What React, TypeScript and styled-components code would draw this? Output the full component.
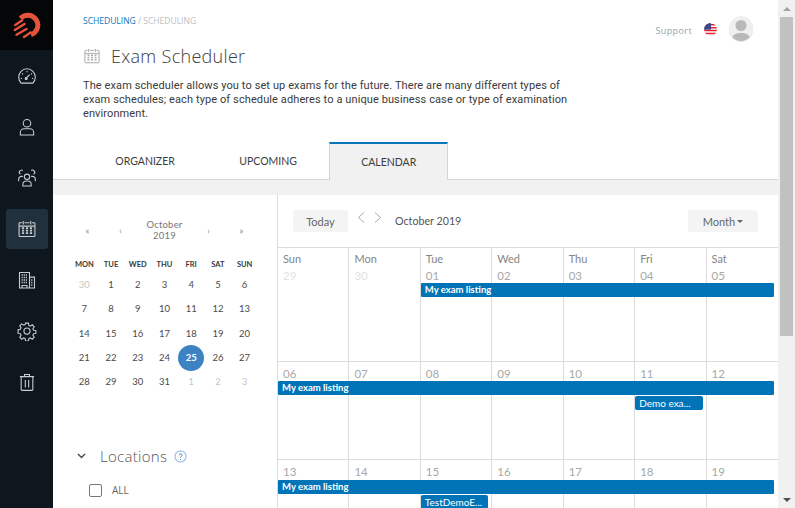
import React from "react";
import styled, { createGlobalStyle } from "styled-components";

const GlobalStyle = createGlobalStyle`
  html, body {
    margin: 0;
    padding: 0;
    height: 100%;
    overflow: hidden;
    background: #fff;
  }
  * {
    box-sizing: border-box;
  }
`;

const Page = styled.div`
  display: flex;
  width: 795px;
  height: 508px;
  overflow: hidden;
  font-family: "Lato", "Liberation Sans", sans-serif;
`;

/* sidebar */
const Sidebar = styled.nav`
  flex: 0 0 53px;
  background: #0f171e;
  display: flex;
  flex-direction: column;
  align-items: center;
`;

const LogoBox = styled.div`
  width: 100%;
  height: 50px;
  background: #040608;
  display: flex;
  align-items: center;
  justify-content: center;
`;

const NavList = styled.div`
  width: 100%;
  display: flex;
  flex-direction: column;
  align-items: center;
  padding-top: 6px;
`;

const NavItem = styled.div<{ $active?: boolean }>`
  width: 42px;
  height: 40px;
  margin-bottom: 11px;
  border-radius: 3px;
  background: ${({ $active }) => ($active ? "#20303c" : "transparent")};
  color: #c9cdd0;
  display: flex;
  align-items: center;
  justify-content: center;
`;

/* main column */
const Main = styled.main`
  flex: 1;
  min-width: 0;
  display: flex;
  flex-direction: column;
  overflow: hidden;
`;

const Header = styled.header`
  height: 142px;
  padding: 15px 25px 0 30px;
  display: flex;
  justify-content: space-between;
  align-items: flex-start;
`;

const HeaderText = styled.div`
  width: 490px;
`;

const Breadcrumb = styled.div`
  font-family: "Open Sans", sans-serif;
  font-size: 8.5px;
  line-height: 12px;
  color: #c0c0c0;
  text-transform: uppercase;

  span {
    color: #0b79b8;
  }
`;

const TitleRow = styled.div`
  display: flex;
  align-items: center;
  gap: 10px;
  margin-top: 16px;
  color: #a9a9a9;
`;

const Title = styled.h1`
  margin: 0;
  font-family: "Open Sans", sans-serif;
  font-weight: 300;
  font-size: 18px;
  line-height: 26px;
  color: #3c3c3c;
  letter-spacing: 0.3px;
`;

const Intro = styled.p`
  margin: 10px 0 0;
  font-family: "Roboto", sans-serif;
  font-size: 11px;
  line-height: 14px;
  color: #3a3a3a;
  letter-spacing: 0.1px;
`;

const UserTools = styled.div`
  display: flex;
  align-items: center;
  margin-top: 1px;
`;

const SupportLink = styled.span`
  font-family: "Open Sans", sans-serif;
  font-size: 9px;
  color: #99a1ab;
  letter-spacing: 0.4px;
  margin: 4px 12px 0 0;
`;

const FlagIcon = styled.svg`
  margin-top: 2px;
`;

const Avatar = styled.div`
  width: 24px;
  height: 25px;
  margin-left: 12px;
  border-radius: 50%;
  background: #eeeff1;
  overflow: hidden;
  box-shadow: 0 1px 0 #e2e2e2;
`;

const TabBar = styled.div`
  height: 38px;
  padding-left: 30px;
  display: flex;
  border-bottom: 1px solid #d5d5d5;
`;

const Tab = styled.div<{ $active?: boolean }>`
  padding: 1px 32.25px 0;
  height: ${({ $active }) => ($active ? "38px" : "37px")};
  display: flex;
  align-items: center;
  justify-content: center;
  font-size: 10.5px;
  color: #3d3d3d;
  ${({ $active }) =>
    $active
      ? `
    background: #f1f1f1;
    border-top: 2px solid #0676b9;
    border-left: 1px solid #d5d5d5;
    border-right: 1px solid #d5d5d5;
    padding: 0 31px;
  `
      : ""}
`;

const Band = styled.div`
  height: 15px;
  background: #f1f1f1;
  flex: none;
`;

const Content = styled.div`
  flex: 1;
  min-height: 0;
  display: flex;
`;

/* left panel */
const LeftPanel = styled.aside`
  flex: 0 0 225px;
  border-right: 1px solid #dcdcdc;
  padding: 23px 0 0 18px;
`;

const MiniNav = styled.div`
  width: 187px;
  height: 24px;
  display: grid;
  grid-template-columns: 33px 33px 55px 33px 33px;
  align-items: center;
  justify-items: center;
  margin-bottom: 14px;
`;

const MiniArrow = styled.span`
  font-size: 9px;
  color: #8a8a8a;
`;

const MiniMonth = styled.div`
  font-size: 9.5px;
  line-height: 11px;
  letter-spacing: 0.2px;
  text-align: center;
  color: #7d7474;
`;

const MiniGrid = styled.div`
  width: 187px;
  display: grid;
  grid-template-columns: repeat(7, 1fr);
  grid-template-rows: 17px repeat(5, 24.3px);
  align-items: center;
  justify-items: center;
`;

const WeekDay = styled.div`
  font-size: 7.5px;
  font-weight: 700;
  color: #3a3a3a;
`;

const MiniDay = styled.div<{ $muted?: boolean; $selected?: boolean }>`
  width: 26px;
  height: 26px;
  line-height: 26px;
  text-align: center;
  font-size: 9.5px;
  border-radius: 50%;
  color: ${({ $muted, $selected }) =>
    $selected ? "#fff" : $muted ? "#c6c6c6" : "#4a4a4a"};
  background: ${({ $selected }) => ($selected ? "#3d83c4" : "transparent")};
  font-weight: ${({ $selected }) => ($selected ? 700 : 400)};
`;

const FilterHead = styled.div`
  display: flex;
  align-items: center;
  margin: 53px 0 0 6px;
  color: #4a4a4a;
`;

const FilterTitle = styled.div`
  font-family: "Open Sans", sans-serif;
  font-weight: 300;
  font-size: 15px;
  line-height: 18px;
  color: #555;
  letter-spacing: 0.3px;
  margin: 0 7px 0 14px;
`;

const CheckRow = styled.label`
  display: flex;
  align-items: center;
  gap: 10px;
  margin: 19px 0 0 18px;
  font-family: "Open Sans", sans-serif;
  font-size: 10px;
  line-height: 13px;
  color: #666;
`;

const CheckBox = styled.span`
  width: 13px;
  height: 13px;
  border: 1px solid #777;
  border-radius: 2px;
`;

/* calendar */
const CalendarPanel = styled.section`
  flex: 1;
  min-width: 0;
  display: flex;
  flex-direction: column;
  overflow: hidden;
`;

const Toolbar = styled.div`
  height: 52px;
  flex: none;
  padding: 15px 20px 0 15px;
  display: flex;
  align-items: flex-start;
`;

const ToolButton = styled.div<{ $width: number }>`
  width: ${({ $width }) => $width}px;
  height: 22px;
  background: #f4f4f4;
  border-radius: 3px;
  font-size: 11px;
  color: #666;
  display: flex;
  align-items: center;
  justify-content: center;
  gap: 2px;
`;

const PagerIcons = styled.div`
  display: flex;
  gap: 5px;
  margin-left: 7px;
  color: #aaa;
`;

const MonthLabel = styled.div`
  font-size: 10.7px;
  color: #555;
  line-height: 22px;
  margin-left: 11px;
  flex: 1;
`;

const Caret = styled.span`
  width: 0;
  height: 0;
  border-left: 3px solid transparent;
  border-right: 3px solid transparent;
  border-top: 3px solid #666;
`;

const Week = styled.div<{ $height: number; $head: number }>`
  height: ${({ $height }) => $height}px;
  flex: none;
  display: grid;
  grid-template-columns: repeat(7, 1fr);
  grid-template-rows: ${({ $head }) => $head}px 14px 1px 14px 1fr;
  border-top: 1px solid #dcdcdc;
`;

const DayCell = styled.div<{ $col: number }>`
  grid-column: ${({ $col }) => $col};
  grid-row: 1 / -1;
  border-right: 1px solid #dcdcdc;
  padding: 3px 0 0 5px;
  font-size: 11px;
  line-height: 17px;
  min-width: 0;

  &:nth-child(7) {
    border-right: none;
  }
`;

const DayName = styled.div`
  color: #858585;
  margin-top: -1px;
`;

const DayNumber = styled.div<{ $muted?: boolean }>`
  color: ${({ $muted }) => ($muted ? "#e2e2e2" : "#a8a8a8")};
  font-size: 11.5px;
`;

const EventBar = styled.div<{ $start: number; $span: number; $row: number; $short?: boolean }>`
  grid-column: ${({ $start, $span }) => `${$start} / span ${$span}`};
  grid-row: ${({ $row }) => $row};
  z-index: 1;
  margin-right: 4px;
  background: #0074b7;
  border-radius: ${({ $short }) => ($short ? "2px" : "1px")};
  color: #fff;
  font-size: ${({ $short }) => ($short ? "10px" : "9.5px")};
  font-weight: ${({ $short }) => ($short ? 400 : 700)};
  line-height: 14px;
  padding-left: 4px;
  white-space: nowrap;
  overflow: hidden;
`;

/* scrollbar */
const ScrollTrack = styled.div`
  flex: 0 0 17px;
  background: #f1f1f1;
  display: flex;
  flex-direction: column;
  align-items: center;
`;

const ScrollArrow = styled.div<{ $up?: boolean }>`
  height: 17px;
  flex: none;
  display: flex;
  align-items: center;
  justify-content: center;

  &::before {
    content: "";
    border-left: 4px solid transparent;
    border-right: 4px solid transparent;
    ${({ $up }) =>
      $up ? "border-bottom: 4px solid #a3a3a3;" : "border-top: 4px solid #505050;"}
  }
`;

const ScrollThumb = styled.div`
  width: 13px;
  height: 319px;
  background: #c1c1c1;
`;

const ScrollSpacer = styled.div`
  flex: 1;
`;

const Logo = () => (
  <svg width="28" height="28" viewBox="0 0 28 28" fill="none" stroke="#e5533a" strokeLinecap="round">
    <path d="M7.500 7.400 A10 10 0 1 1 18 23.700" strokeWidth="5" strokeLinecap="butt" />
    <path d="M2.300 14 L9.200 9.300" strokeWidth="2.400" />
    <path d="M1.800 19 L11.500 13" strokeWidth="2.400" />
    <path d="M3.500 23.800 L13.500 18" strokeWidth="2.400" />
    <path d="M11 26 L17.500 21.500" strokeWidth="2.400" />
  </svg>
);

const Line = ({ size = 20, children }: { size?: number; children: React.ReactNode }) => (
  <svg width={size} height={size} viewBox="0 0 24 24" fill="none" stroke="currentColor" strokeWidth="1.300">
    {children}
  </svg>
);

const CalendarGlyph = ({ size = 20 }: { size?: number }) => (
  <Line size={size}>
    <path d="M6 4.500H3.500a1 1 0 0 0-1 1V20a1 1 0 0 0 1 1h17a1 1 0 0 0 1-1V5.500a1 1 0 0 0-1-1H18M9 4.500h6" />
    <path d="M7.500 2.500v4M16.500 2.500v4M2.500 8.500h19" />
    <path
      d="M6 11h2.500M10.700 11h2.600M15.500 11h2.500M6 14h2.500M10.700 14h2.600M15.500 14h2.500M6 17h2.500M10.700 17h2.600M15.500 17h2.500"
      strokeWidth="2"
    />
  </Line>
);

const navIcons = [
  <Line key="gauge">
    <path d="M5 20.500a10 10 0 1 1 14 0z" />
    <path d="M12 6v1.500M6 9l1.200 1M18 9l-1.200 1M4.500 15H6M19.500 15H18" />
    <path d="M11.200 14.300l4-3.800" />
    <circle cx="11" cy="15" r="1.200" fill="currentColor" />
  </Line>,
  <Line key="user">
    <circle cx="12" cy="7.500" r="4.500" />
    <path d="M4 21.500v-3a4.500 4.500 0 0 1 4.500-4.500h7a4.500 4.500 0 0 1 4.500 4.500v3z" />
  </Line>,
  <Line key="group">
    <circle cx="12" cy="10.500" r="3.200" />
    <path d="M7 21.500v-2a4 4 0 0 1 4-4h2a4 4 0 0 1 4 4v2z" />
    <path d="M4 7.500a2.500 2.500 0 0 1 3-4.500M20 7.500a2.500 2.500 0 0 0-3-4.500" />
    <path d="M2 16v-2.500A3.500 3.500 0 0 1 5.500 10H7M22 16v-2.500a3.500 3.500 0 0 0-3.500-3.500H17" />
  </Line>,
  <CalendarGlyph key="cal" />,
  <Line key="building">
    <path d="M3 21.500V3h12v18.500zM15 8.500h6v13h-6z" />
    <path
      d="M5.500 6h7M5.500 9h7M5.500 12h7M5.500 15h7M17 12h2.500M17 15h2.500M17 18h2.500"
      strokeWidth="1.800"
      strokeDasharray="1.500 1"
    />
    <path d="M6 21.500v-3h6v3" />
  </Line>,
  <Line key="gear">
    <path d="M10.300 2.500h3.400l.5 2.800 1.700.8 2.400-1.600 2.400 2.400-1.600 2.400.8 1.700 2.800.500v3.400l-2.800.5-.8 1.700 1.600 2.400-2.400 2.400-2.400-1.600-1.700.8-.5 2.800h-3.400l-.5-2.800-1.700-.8-2.400 1.600-2.400-2.400 1.600-2.400-.8-1.700-2.800-.5V10.500l2.800-.5.8-1.700-1.600-2.400 2.400-2.400 2.400 1.600 1.700-.8z" />
    <circle cx="12" cy="12" r="3.700" />
  </Line>,
  <Line key="trash">
    <path d="M3.500 5.500h17M9 5.500V3h6v2.500M5 5.500V21a1 1 0 0 0 1 1h12a1 1 0 0 0 1-1V5.500M10 9.500v9M14 9.500v9" />
  </Line>,
];

const miniWeeks = [
  [30, 1, 2, 3, 4, 5, 6],
  [7, 8, 9, 10, 11, 12, 13],
  [14, 15, 16, 17, 18, 19, 20],
  [21, 22, 23, 24, 25, 26, 27],
  [28, 29, 30, 31, 1, 2, 3],
];

const dayNames = ["Sun", "Mon", "Tue", "Wed", "Thu", "Fri", "Sat"];

const weeks = [
  {
    height: 114,
    head: 35,
    days: ["29", "30", "01", "02", "03", "04", "05"],
    events: [{ start: 3, span: 5, row: 2, label: "My exam listing" }],
  },
  {
    height: 98,
    head: 19,
    days: ["06", "07", "08", "09", "10", "11", "12"],
    events: [
      { start: 1, span: 7, row: 2, label: "My exam listing" },
      { start: 6, span: 1, row: 4, label: "Demo exa..." },
    ],
  },
  {
    height: 98,
    head: 20,
    days: ["13", "14", "15", "16", "17", "18", "19"],
    events: [
      { start: 1, span: 7, row: 2, label: "My exam listing" },
      { start: 3, span: 1, row: 4, label: "TestDemoE..." },
    ],
  },
];

export default function App() {
  return (
    <Page>
      <GlobalStyle />
      <Sidebar>
        <LogoBox>
          <Logo />
        </LogoBox>
        <NavList>
          {navIcons.map((icon, i) => (
            <NavItem key={i} $active={i === 3}>
              {icon}
            </NavItem>
          ))}
        </NavList>
      </Sidebar>

      <Main>
        <Header>
          <HeaderText>
            <Breadcrumb>
              <span>Scheduling</span> / Scheduling
            </Breadcrumb>
            <TitleRow>
              <CalendarGlyph size={18} />
              <Title>Exam Scheduler</Title>
            </TitleRow>
            <Intro>
              The exam scheduler allows you to set up exams for the future. There are many different types of
              exam schedules; each type of schedule adheres to a unique business case or type of examination
              environment.
            </Intro>
          </HeaderText>
          <UserTools>
            <SupportLink>Support</SupportLink>
            <FlagIcon width="13" height="13" viewBox="0 0 14 14">
              <clipPath id="flag">
                <circle cx="7" cy="7" r="7" />
              </clipPath>
              <g clipPath="url(#flag)">
                <rect width="14" height="14" fill="#fff" />
                <path d="M0 1h14v1.600H0zM0 4.200h14v1.600H0zM0 7.400h14V9H0zM0 10.600h14v1.600H0z" fill="#e8202f" />
                <rect width="7.500" height="7.200" fill="#3b4a8c" />
              </g>
            </FlagIcon>
            <Avatar>
              <svg width="24" height="25" viewBox="0 0 24 25" fill="#b9b9b9">
                <circle cx="12" cy="9.500" r="5.500" />
                <path d="M2.500 25c0-6 4-8 9.500-8s9.500 2 9.500 8z" />
              </svg>
            </Avatar>
          </UserTools>
        </Header>

        <TabBar>
          <Tab>ORGANIZER</Tab>
          <Tab>UPCOMING</Tab>
          <Tab $active>CALENDAR</Tab>
        </TabBar>
        <Band />

        <Content>
          <LeftPanel>
            <MiniNav>
              <MiniArrow>«</MiniArrow>
              <MiniArrow>‹</MiniArrow>
              <MiniMonth>
                October
                <br />
                2019
              </MiniMonth>
              <MiniArrow>›</MiniArrow>
              <MiniArrow>»</MiniArrow>
            </MiniNav>
            <MiniGrid>
              {["MON", "TUE", "WED", "THU", "FRI", "SAT", "SUN"].map((d) => (
                <WeekDay key={d}>{d}</WeekDay>
              ))}
              {miniWeeks.map((week, w) =>
                week.map((d, i) => (
                  <MiniDay
                    key={`${w}-${i}`}
                    $muted={(w === 0 && d > 20) || (w === 4 && d < 10)}
                    $selected={d === 25}
                  >
                    {d}
                  </MiniDay>
                ))
              )}
            </MiniGrid>
            <FilterHead>
              <svg width="9" height="6" viewBox="0 0 9 6" fill="none" stroke="currentColor" strokeWidth="1.400">
                <path d="M1 1l3.500 3.500L8 1" />
              </svg>
              <FilterTitle>Locations</FilterTitle>
              <svg width="13" height="13" viewBox="0 0 13 13" fill="none">
                <circle cx="6.500" cy="6.500" r="5.500" stroke="#a9c8ec" strokeWidth="1.400" />
                <path d="M5 5.200a1.500 1.500 0 1 1 2.300 1.300c-.6.400-.8.600-.8 1.200M6.500 9v.8" stroke="#4f7fb5" />
              </svg>
            </FilterHead>
            <CheckRow>
              <CheckBox />
              ALL
            </CheckRow>
          </LeftPanel>

          <CalendarPanel>
            <Toolbar>
              <ToolButton $width={55}>Today</ToolButton>
              <PagerIcons>
                <svg width="12" height="16" viewBox="0 0 12 16" fill="none" stroke="currentColor">
                  <path d="M9 2.500L3.500 7.500 9 12.500" />
                </svg>
                <svg width="12" height="16" viewBox="0 0 12 16" fill="none" stroke="currentColor">
                  <path d="M3 2.500l5.500 5L3 12.500" />
                </svg>
              </PagerIcons>
              <MonthLabel>October 2019</MonthLabel>
              <ToolButton $width={70}>
                Month
                <Caret />
              </ToolButton>
            </Toolbar>
            {weeks.map((week, w) => (
              <Week key={w} $height={week.height} $head={week.head}>
                {week.days.map((d, i) => (
                  <DayCell key={d} $col={i + 1}>
                    {w === 0 && <DayName>{dayNames[i]}</DayName>}
                    <DayNumber $muted={w === 0 && i < 2}>{d}</DayNumber>
                  </DayCell>
                ))}
                {week.events.map((ev) => (
                  <EventBar key={ev.label} $start={ev.start} $span={ev.span} $row={ev.row} $short={ev.span === 1}>
                    {ev.label}
                  </EventBar>
                ))}
              </Week>
            ))}
          </CalendarPanel>
        </Content>
      </Main>

      <ScrollTrack>
        <ScrollArrow $up />
        <ScrollThumb />
        <ScrollSpacer />
        <ScrollArrow />
      </ScrollTrack>
    </Page>
  );
}
